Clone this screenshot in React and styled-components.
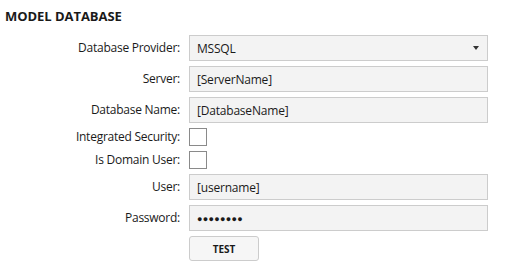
import React from 'react';
import styled, { createGlobalStyle } from 'styled-components';

const GlobalStyle = createGlobalStyle`
  html, body {
    margin: 0;
    padding: 0;
    background: #ffffff;
    font-family: "Open Sans", "Noto Sans", sans-serif;
    color: #1a1a1a;
  }
`;

const Panel = styled.div`
  width: 510px;
  height: 272px;
  box-sizing: border-box;
  padding: 7px 0 0 5px;
`;

const Title = styled.h2`
  margin: 0;
  font-size: 13px;
  font-weight: 700;
  line-height: 18px;
  letter-spacing: -0.05px;
`;

const Form = styled.div`
  display: grid;
  grid-template-columns: 175px 299px;
  column-gap: 9px;
  row-gap: 5px;
  margin-top: 10px;
  align-items: center;
`;

const Label = styled.label`
  font-size: 12px;
  text-align: right;
  line-height: 16px;
  letter-spacing: -0.25px;
`;

const Field = styled.div`
  box-sizing: border-box;
  height: 26px;
  border: 1px solid #cccccc;
  background: #f3f3f3;
  display: flex;
  align-items: center;
  justify-content: space-between;
  padding: 0 8px 0 7px;
  font-size: 12px;
  letter-spacing: -0.2px;
  color: #1a1a1a;
`;

const Caret = styled.span`
  width: 0;
  height: 0;
  border-left: 3.5px solid transparent;
  border-right: 3.5px solid transparent;
  border-top: 4px solid #333333;
`;

const Dots = styled.span`
  font-size: 9px;
  letter-spacing: 0.3px;
  line-height: 1;
`;

const CheckBox = styled.span`
  display: block;
  box-sizing: border-box;
  width: 18px;
  height: 18px;
  border: 1px solid #8a8a8a;
  background: #ffffff;
`;

const Button = styled.button`
  box-sizing: border-box;
  width: 70px;
  height: 25px;
  border: 1px solid #cccccc;
  border-radius: 3px;
  background: #f6f6f6;
  font-family: "Open Sans", "Noto Sans", sans-serif;
  font-size: 10px;
  font-weight: 700;
  color: #1a1a1a;
  padding: 0;
`;

const Spacer = styled.span``;

const fields = [
  { label: 'Server:', value: '[ServerName]' },
  { label: 'Database Name:', value: '[DatabaseName]' },
];

export default function App() {
  return (
    <Panel>
      <GlobalStyle />
      <Title>MODEL DATABASE</Title>
      <Form>
        <Label>Database Provider:</Label>
        <Field>
          <span>MSSQL</span>
          <Caret />
        </Field>
        {fields.map((f) => (
          <React.Fragment key={f.label}>
            <Label>{f.label}</Label>
            <Field>{f.value}</Field>
          </React.Fragment>
        ))}
        <Label>Integrated Security:</Label>
        <CheckBox />
        <Label>Is Domain User:</Label>
        <CheckBox />
        <Label>User:</Label>
        <Field>[username]</Field>
        <Label>Password:</Label>
        <Field>
          <Dots>●●●●●●●●</Dots>
        </Field>
        <Spacer />
        <Button>TEST</Button>
      </Form>
    </Panel>
  );
}
